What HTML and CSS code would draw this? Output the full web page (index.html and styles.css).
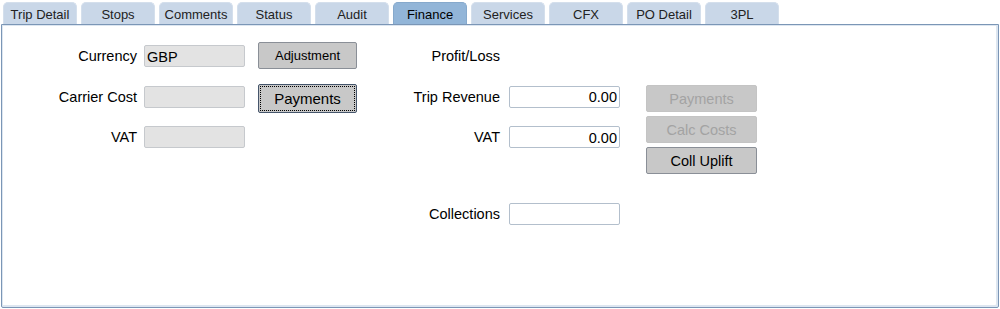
FILE: index.html
```html
<!DOCTYPE html>
<html lang="en">

<head>
    <meta charset="UTF-8">
    <title>Trip - Finance</title>
    <link rel="stylesheet" href="styles.css">
</head>

<body>
    <div class="tabs">
        <div class="tab">Trip Detail</div>
        <div class="tab">Stops</div>
        <div class="tab">Comments</div>
        <div class="tab">Status</div>
        <div class="tab">Audit</div>
        <div class="tab active">Finance</div>
        <div class="tab">Services</div>
        <div class="tab">CFX</div>
        <div class="tab">PO Detail</div>
        <div class="tab">3PL</div>
    </div>
    <div class="panel">
        <div class="costs">
            <label>Currency</label>
            <input class="field readonly" type="text" value="GBP" readonly>
            <label>Carrier Cost</label>
            <input class="field readonly" type="text" value="" readonly>
            <label>VAT</label>
            <input class="field readonly" type="text" value="" readonly>
        </div>
        <div class="cost-btns">
            <button class="btn small">Adjustment</button>
            <button class="btn focused">Payments</button>
        </div>
        <div class="profit">
            <label>Profit/Loss</label>
            <span></span>
            <label>Trip Revenue</label>
            <input class="field num" type="text" value="0.00">
            <label>VAT</label>
            <input class="field num" type="text" value="0.00">
            <label class="gap">Collections</label>
            <input class="field gap" type="text" value="">
        </div>
        <div class="side-btns">
            <button class="btn wide" disabled>Payments</button>
            <button class="btn wide" disabled>Calc Costs</button>
            <button class="btn wide">Coll Uplift</button>
        </div>
    </div>
</body>

</html>
```

FILE: styles.css
```css
body {
    font-family: "Liberation Sans", Arial, sans-serif;
    margin: 0;
    background-color: #fff;
    color: #000;
}

.tabs {
    display: flex;
    gap: 4px;
    padding: 2px 0 0 3px;
    height: 22px;
}

.tab {
    width: 74px;
    height: 22px;
    line-height: 23px;
    text-align: center;
    font-size: 13px;
    color: #222;
    background-color: #c9d7e8;
    border-radius: 5px 5px 0 0;
    box-sizing: border-box;
    border: 1px solid #d4dfec;
    border-bottom: none;
}

.tab.active {
    background-color: #92b5d8;
    border-color: #86a9cc;
    color: #000;
}

.panel {
    margin: 0 1px 0 1px;
    height: 284px;
    box-sizing: border-box;
    border: 1px solid #7b96b6;
    border-radius: 0 0 2px 2px;
    box-shadow: inset 1px 1px 0 #dde6f0, inset -2px -2px 0 #dde6f0;
    display: flex;
    align-items: flex-start;
    padding-top: 17px;
    font-size: 14.5px;
}

.costs,
.profit {
    display: grid;
    align-items: center;
    row-gap: 18.5px;
    margin-top: 3px;
}

.costs {
    grid-template-columns: 135px 101px;
    column-gap: 7px;
}

.profit {
    grid-template-columns: 142px 111px;
    column-gap: 9px;
    margin-left: 1px;
}

label {
    text-align: right;
    height: 22px;
    line-height: 23px;
}

.profit .gap {
    margin-top: 36px;
}

.field {
    height: 22px;
    box-sizing: border-box;
    border: 1px solid #b3bfcc;
    border-radius: 2px;
    padding: 1px 2px 0;
    font-family: inherit;
    font-size: 14.5px;
    color: #000;
    background: #fff;
    outline: none;
}

.field.readonly {
    background: #e3e3e3;
    border-color: #c6c9cd;
}

.field.num {
    text-align: right;
}

.btn {
    display: block;
    height: 27px;
    box-sizing: border-box;
    background-color: #c8c8c8;
    border: 1px solid #8a8f97;
    border-radius: 2px;
    font-family: inherit;
    font-size: 14.5px;
    color: #000;
    padding: 0;
}

.cost-btns {
    margin-left: 13px;
    width: 99px;
}

.cost-btns .btn {
    width: 99px;
}

.btn.small {
    font-size: 13px;
}

.btn.focused {
    margin-top: 15px;
    height: 29px;
    font-size: 15px;
    border-color: #45556b;
    outline: 1px dotted #000;
    outline-offset: -3px;
}

.side-btns {
    margin-left: 26px;
    margin-top: 43px;
    display: flex;
    flex-direction: column;
    gap: 4px;
}

.btn.wide {
    width: 111px;
}

.btn:disabled {
    color: #a3a3a3;
    border-color: #c4c4c4;
}
```
